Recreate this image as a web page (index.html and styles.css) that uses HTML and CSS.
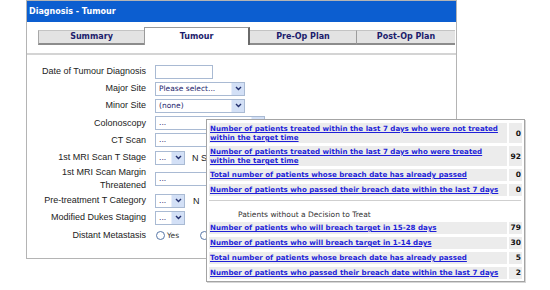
FILE: index.html
```html
<!DOCTYPE html>
<html lang="en">
<head>
<meta charset="UTF-8">
<title>Diagnosis - Tumour</title>
<link rel="stylesheet" href="styles.css">
</head>
<body>

<div class="panel">
  <div class="header">Diagnosis - Tumour</div>

  <div class="tabs">
    <div class="tab summary">Summary</div>
    <div class="tab active">Tumour</div>
    <div class="tab preop">Pre-Op Plan</div>
    <div class="tab postop">Post-Op Plan</div>
  </div>
  <div class="tab-line"></div>

  <div class="form">
    <div class="row">
      <div class="label">Date of Tumour Diagnosis</div>
      <span class="input date"></span>
    </div>

    <div class="row">
      <div class="label">Major Site</div>
      <span class="select mid"><span class="val">Please select...</span><span class="arrow"><svg width="7" height="5" viewBox="0 0 7 5"><path d="M1 1 L3.5 3.5 L6 1" fill="none" stroke="#23306e" stroke-width="1.4"/></svg></span></span>
    </div>

    <div class="row">
      <div class="label">Minor Site</div>
      <span class="select mid"><span class="val">(none)</span><span class="arrow"><svg width="7" height="5" viewBox="0 0 7 5"><path d="M1 1 L3.5 3.5 L6 1" fill="none" stroke="#23306e" stroke-width="1.4"/></svg></span></span>
    </div>

    <div class="row">
      <div class="label">Colonoscopy</div>
      <span class="select wide"><span class="val">...</span><span class="arrow"><svg width="7" height="5" viewBox="0 0 7 5"><path d="M1 1 L3.5 3.5 L6 1" fill="none" stroke="#23306e" stroke-width="1.4"/></svg></span></span>
    </div>

    <div class="row">
      <div class="label">CT Scan</div>
      <span class="select wide"><span class="val">...</span><span class="arrow"><svg width="7" height="5" viewBox="0 0 7 5"><path d="M1 1 L3.5 3.5 L6 1" fill="none" stroke="#23306e" stroke-width="1.4"/></svg></span></span>
    </div>

    <div class="row">
      <div class="label">1st MRI Scan T Stage</div>
      <span class="select small"><span class="val">...</span><span class="arrow"><svg width="7" height="5" viewBox="0 0 7 5"><path d="M1 1 L3.5 3.5 L6 1" fill="none" stroke="#23306e" stroke-width="1.4"/></svg></span></span>
      <span class="after">N S</span>
    </div>

    <div class="row tall">
      <div class="label">1st MRI Scan Margin<br>Threatened</div>
      <span class="select wide"><span class="val">...</span><span class="arrow"><svg width="7" height="5" viewBox="0 0 7 5"><path d="M1 1 L3.5 3.5 L6 1" fill="none" stroke="#23306e" stroke-width="1.4"/></svg></span></span>
    </div>

    <div class="row">
      <div class="label">Pre-treatment T Category</div>
      <span class="select small"><span class="val">...</span><span class="arrow"><svg width="7" height="5" viewBox="0 0 7 5"><path d="M1 1 L3.5 3.5 L6 1" fill="none" stroke="#23306e" stroke-width="1.4"/></svg></span></span>
      <span class="after n">N</span><span class="input box"></span>
    </div>

    <div class="row">
      <div class="label">Modified Dukes Staging</div>
      <span class="select small"><span class="val">...</span><span class="arrow"><svg width="7" height="5" viewBox="0 0 7 5"><path d="M1 1 L3.5 3.5 L6 1" fill="none" stroke="#23306e" stroke-width="1.4"/></svg></span></span>
    </div>

    <div class="row">
      <div class="label">Distant Metastasis</div>
      <span class="radio"></span><span class="opt">Yes</span><span class="radio"></span>
    </div>
  </div>
</div>

<div class="popup">
  <table class="stats">
    <tr class="two"><td class="link"><a href="#">Number of patients treated within the last 7 days who were not treated<br>within the target time</a></td><td class="num">0</td></tr>
    <tr class="two"><td class="link"><a href="#">Number of patients treated within the last 7 days who were treated<br>within the target time</a></td><td class="num">92</td></tr>
    <tr><td class="link"><a href="#">Total number of patients whose breach date has already passed</a></td><td class="num">0</td></tr>
    <tr><td class="link"><a href="#">Number of patients who passed their breach date within the last 7 days</a></td><td class="num">0</td></tr>
  </table>
  <div class="rule"></div>
  <div class="subhead">Patients without a Decision to Treat</div>
  <table class="stats">
    <tr><td class="link"><a href="#">Number of patients who will breach target in 15-28 days</a></td><td class="num">79</td></tr>
    <tr><td class="link"><a href="#">Number of patients who will breach target in 1-14 days</a></td><td class="num">30</td></tr>
    <tr><td class="link"><a href="#">Total number of patients whose breach date has already passed</a></td><td class="num">5</td></tr>
    <tr><td class="link"><a href="#">Number of patients who passed their breach date within the last 7 days</a></td><td class="num">2</td></tr>
  </table>
</div>

</body>
</html>
```

FILE: styles.css
```css
body { margin: 0; background: #fff; font-family: "Liberation Sans", Arial, sans-serif; }

.panel { margin-left: 26px; width: 431px; height: 259px; box-sizing: border-box; border: 1px solid #b4b4b4; }
.header { height: 21px; padding-left: 2px; background: #0c5ed0; color: #fff;
          font: bold 8px/21px "DejaVu Sans", Verdana, sans-serif; }

.tabs { display: flex; align-items: flex-end; margin-top: 5px; padding-left: 11px; height: 18px; }
.tab { box-sizing: border-box; height: 15px; text-align: center; background: #e3e3e3;
       border-top: 1px solid #c4c4c4; border-bottom: 2px solid #8c8c8c;
       font: bold 8px/12px "DejaVu Sans", Verdana, sans-serif; color: #1c1c6c; }
.tab.summary { width: 106px; border-left: 1px solid #a8a8a8; }
.tab.active { width: 106px; height: 18px; line-height: 18px; background: #fff; border: 1px solid #9a9a9a;
              border-right: 2px solid #6a6a6a; border-bottom: none; }
.tab.preop { width: 107px; border-right: 1px solid #9c9c9c; }
.tab.postop { width: 98px; }
.tab-line { height: 2px; margin-top: 8px; background: #d4d4d4; }

.form { margin-top: 8px; font-size: 9px; color: #222; }
.row { display: flex; align-items: center; height: 17.2px; white-space: nowrap; }
.row.tall { height: 26px; }
.label { width: 119px; margin-right: 9px; text-align: right; line-height: 13px; }

.input { display: inline-block; box-sizing: border-box; height: 14px; border: 1px solid #a9bad3; background: #fff; }
.input.date { width: 58px; }
.input.box { width: 30px; margin-left: 6px; }

.select { display: inline-flex; box-sizing: border-box; height: 14px; border: 1px solid #a9bad3; background: #fff;
          font: 7.5px/12px "DejaVu Sans", Verdana, sans-serif; color: #1c1c6c; }
.select .val { flex: 1; padding-left: 3px; overflow: hidden; }
.select .arrow { width: 12px; display: flex; align-items: center; justify-content: center;
                 background: #d3e0f6; border-left: 1px solid #e8eefa; }
.select.mid { width: 90px; }
.select.wide { width: 110px; }
.select.small { width: 30px; }

.after { margin-left: 7px; }
.after.n { margin-left: 8px; }

.radio { display: inline-block; box-sizing: border-box; width: 9px; height: 9px; border: 1px solid #5877a8;
         border-radius: 50%; background: #fff; margin-left: 1px; }
.opt { font: 7.5px "DejaVu Sans", Verdana, sans-serif; color: #333; margin: 0 20px 0 2px; }

.popup { position: absolute; left: 206px; top: 119px; width: 319px; height: 163px; box-sizing: border-box;
         background: #fff; border: 1px solid #a4a4a4; box-shadow: 1px 1px 0 #d6d6d6;
         font-family: "DejaVu Sans", Verdana, sans-serif; }
.stats { width: 100%; table-layout: fixed; border-spacing: 2px 3px; }
.stats td { background: #ececec; padding: 1px 1px; font-size: 7.1px; line-height: 10px; vertical-align: middle; }
.stats tr.two td { line-height: 9px; }
.stats .link { width: 296px; overflow: hidden; }
.stats a { color: #1f1fd8; font-weight: bold; text-decoration: underline; white-space: nowrap; }
.stats .num { text-align: right; font-weight: bold; color: #111; font-size: 7.5px; }
.rule { height: 1px; margin: 1px 3px 0 2px; background: #cfcfcf; }
.subhead { padding: 9px 0 0 31px; font-size: 7.5px; color: #333; }
```
